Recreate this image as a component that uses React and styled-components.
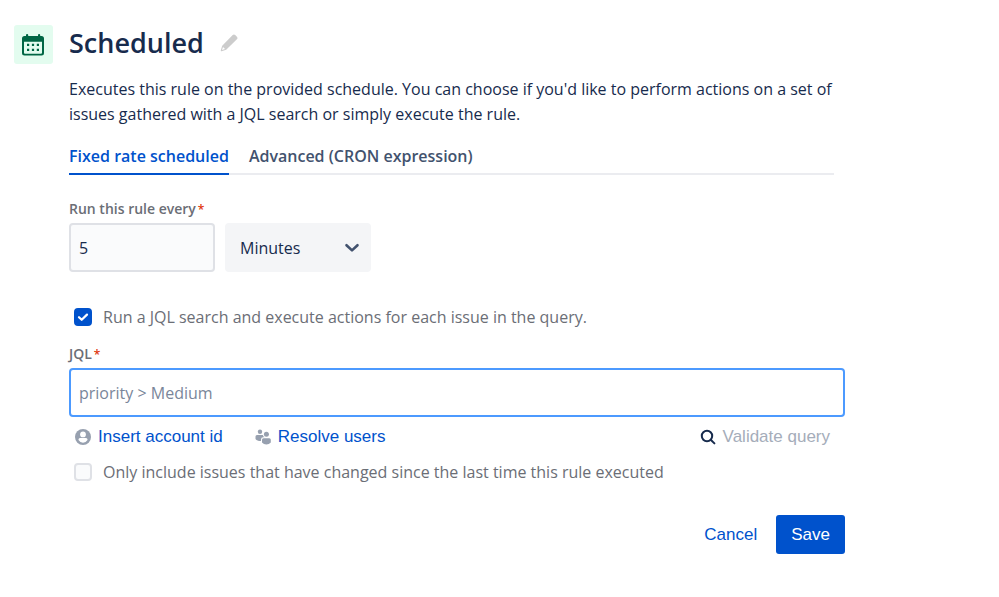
import React, { useState } from "react";
import styled, { createGlobalStyle } from "styled-components";

function App() {
    const [tab, setTab] = useState("fixed");
    const [runSearch, setRunSearch] = useState(true);
    const [onlyChanged, setOnlyChanged] = useState(false);

    return (
        <>
            <GlobalStyle />
            <PanelStyled>
                <IconTile>
                    <CalendarIcon />
                </IconTile>
                <FormStyled onSubmit={(e) => e.preventDefault()}>
                    <TitleRow>
                        <h1>Scheduled</h1>
                        <EditButton type="button" aria-label="Edit name">
                            <PencilIcon />
                        </EditButton>
                    </TitleRow>
                    <Description>
                        Executes this rule on the provided schedule. You can choose if you'd like to perform actions on a set of issues gathered with a JQL search or simply execute the rule.
                    </Description>
                    <TabList role="tablist">
                        <Tab type="button" role="tab" aria-selected={tab === "fixed"} $active={tab === "fixed"} onClick={() => setTab("fixed")}>
                            Fixed rate scheduled
                        </Tab>
                        <Tab type="button" role="tab" aria-selected={tab === "cron"} $active={tab === "cron"} onClick={() => setTab("cron")}>
                            Advanced (CRON expression)
                        </Tab>
                    </TabList>

                    <FieldLabel htmlFor="rate">Run this rule every<span>*</span></FieldLabel>
                    <RateRow>
                        <TextInput id="rate" type="text" defaultValue="5" />
                        <SelectStyled>
                            <select aria-label="Unit" defaultValue="Minutes">
                                <option>Minutes</option>
                                <option>Hours</option>
                                <option>Days</option>
                            </select>
                            <ChevronIcon />
                        </SelectStyled>
                    </RateRow>

                    <CheckRow>
                        <Checkbox checked={runSearch} onChange={setRunSearch} />
                        Run a JQL search and execute actions for each issue in the query.
                    </CheckRow>

                    <FieldLabel htmlFor="jql" $compact>JQL<span>*</span></FieldLabel>
                    <TextInput id="jql" type="text" placeholder="priority > Medium" $focused />
                    <LinkRow>
                        <LinkButton type="button"><PersonIcon />Insert account id</LinkButton>
                        <LinkButton type="button"><PeopleIcon />Resolve users</LinkButton>
                        <ValidateButton type="button" disabled><SearchIcon />Validate query</ValidateButton>
                    </LinkRow>
                    <CheckRow $compact>
                        <Checkbox checked={onlyChanged} onChange={setOnlyChanged} />
                        Only include issues that have changed since the last time this rule executed
                    </CheckRow>

                    <Actions>
                        <CancelButton type="button">Cancel</CancelButton>
                        <SaveButton type="submit">Save</SaveButton>
                    </Actions>
                </FormStyled>
            </PanelStyled>
        </>
    );
}

function Checkbox({ checked, onChange }) {
    return (
        <CheckboxStyled>
            <input type="checkbox" checked={checked} onChange={(e) => onChange(e.target.checked)} />
            {checked && (
                <svg width="18" height="18" viewBox="0 0 18 18" fill="none" aria-hidden="true">
                    <path d="M5 9.2l2.7 2.6L13 6.6" stroke="#fff" strokeWidth="2.2" strokeLinecap="round" strokeLinejoin="round" />
                </svg>
            )}
        </CheckboxStyled>
    );
}

function CalendarIcon() {
    return (
        <svg width="23" height="23" viewBox="0 0 23 23" fill="#006644" aria-hidden="true">
            <path fillRule="evenodd" d="M4 3V2a1 1 0 0 1 2.200 0v1h9.800V2a1 1 0 0 1 2.200 0v1h1.300A2.500 2.500 0 0 1 22 5.500v14.500a2.500 2.500 0 0 1-2.500 2.500h-17A2.500 2.500 0 0 1 0 20V5.500A2.500 2.500 0 0 1 2.500 3zM2 8.800v10.900a1 1 0 0 0 1 1h16a1 1 0 0 0 1-1V8.800z" />
            <path d="M5 10.800h2.200V13H5zM9.900 10.800h2.200V13H9.900zM14.800 10.800H17V13h-2.200zM5 15.800h2.200V18H5zM9.900 15.800h2.200V18H9.900zM14.800 15.800H17V18h-2.200z" />
        </svg>
    );
}

function PencilIcon() {
    return (
        <svg width="18" height="18" viewBox="0 0 18 18" fill="#ccc" aria-hidden="true">
            <path fillRule="evenodd" d="M12.700 1.100a1.800 1.800 0 0 1 2.500 0l1.700 1.700a1.800 1.800 0 0 1 0 2.500L6.200 15.800l-4.500 1.400a.700.700 0 0 1-.900-.900l1.400-4.500zM3 13l-1 3 3-1z" />
        </svg>
    );
}

function ChevronIcon() {
    return (
        <svg width="16" height="10" viewBox="0 0 16 10" fill="none" aria-hidden="true">
            <path d="M2.500 2.200L8 7.400l5.500-5.200" stroke="#42526e" strokeWidth="2.600" strokeLinecap="round" strokeLinejoin="round" />
        </svg>
    );
}

function PersonIcon() {
    return (
        <svg width="16" height="16" viewBox="0 0 16 16" aria-hidden="true">
            <circle cx="8" cy="8" r="8" fill="#97a0af" />
            <circle cx="8" cy="5.400" r="2.900" fill="#fff" />
            <path d="M3.500 11V10.500a1.500 1.500 0 0 1 1.500-1.500h6a1.500 1.500 0 0 1 1.500 1.500V11A6 6 0 0 1 8 13.800 6 6 0 0 1 3.500 11z" fill="#fff" />
        </svg>
    );
}

function PeopleIcon() {
    return (
        <svg width="16" height="16" viewBox="0 0 16 16" fill="#97a0af" aria-hidden="true">
            <circle cx="5" cy="2.700" r="2.200" />
            <circle cx="11.400" cy="5.200" r="2.500" />
            <path d="M2 6h5.800c.500 1.300 1 1.900 1.800 2.300H8.200A2.200 2.200 0 0 0 6 10.500v1.600C3.500 12.200 1.700 11.400.500 10V7.500A1.500 1.500 0 0 1 2 6z" />
            <path d="M8.500 9.200h5.800a1.500 1.500 0 0 1 1.500 1.500v2.900c-1.200 1.300-2.600 1.900-4.400 1.900S8.200 14.900 7 13.600v-2.900a1.500 1.500 0 0 1 1.500-1.500z" />
        </svg>
    );
}

function SearchIcon() {
    return (
        <svg width="16" height="16" viewBox="0 0 16 16" fill="none" stroke="#172b4d" strokeWidth="2" strokeLinecap="round" aria-hidden="true">
            <circle cx="7" cy="7" r="5.200" />
            <path d="M11 11l3.400 3.400" />
        </svg>
    );
}

const GlobalStyle = createGlobalStyle`
    *{
        box-sizing: border-box;
    }
    body{
        margin: 0;
        background: #fff;
        color: #172b4d;
        font-family: "Open Sans", "Noto Sans", sans-serif;
        font-size: 16px;
        line-height: 24px;
    }
    button, input, select{
        margin: 0;
        font: inherit;
    }
    button{
        padding: 0;
        border: none;
        background: none;
        cursor: pointer;
    }
    svg{
        display: block;
        flex: none;
    }
`;

const PanelStyled = styled.main`
    display: grid;
    grid-template-columns: 39px minmax(0, 776px);
    align-items: start;
    gap: 16px;
    padding: 25px 14px;
`;

const IconTile = styled.div`
    display: flex;
    align-items: center;
    justify-content: center;
    height: 39px;
    border-radius: 3px;
    background: #e3fcef;
`;

const FormStyled = styled.form`
    display: flex;
    flex-direction: column;
`;

const TitleRow = styled.div`
    display: flex;
    align-items: center;
    gap: 16px;
    h1{
        margin: 0;
        font-size: 27px;
        font-weight: 600;
        line-height: 36px;
    }
`;

const EditButton = styled.button`
    display: flex;
`;

const Description = styled.p`
    margin: 16px 0 0;
    line-height: 25px;
`;

const TabList = styled.div`
    display: flex;
    gap: 20px;
    margin: 13px 11px 0 0;
    box-shadow: inset 0 -2px #ebecf0;
`;

const Tab = styled.button`
    padding: 4px 0 5px;
    border-bottom: 2px solid ${(props) => (props.$active ? "#0052cc" : "transparent")};
    color: ${(props) => (props.$active ? "#0052cc" : "#42526e")};
    font-weight: 600;
`;

const FieldLabel = styled.label`
    align-self: flex-start;
    margin: ${(props) => (props.$compact ? "15px" : "24px")} 0 4px;
    color: #6b6e76;
    font-size: 14px;
    font-weight: 600;
    line-height: 20px;
    span{
        padding-left: 2px;
        color: #de350b;
        font-size: 12px;
        line-height: 12px;
    }
`;

const RateRow = styled.div`
    display: flex;
    gap: 10px;
    > *{
        width: 146px;
    }
`;

const TextInput = styled.input`
    height: 49px;
    padding: 0 8px;
    border: 2px solid ${(props) => (props.$focused ? "#4c9aff" : "#dfe1e6")};
    border-radius: 4px;
    background: ${(props) => (props.$focused ? "#fff" : "#fafbfc")};
    color: #172b4d;
    outline: none;
    &::placeholder{
        color: #7a869a;
        opacity: 1;
    }
`;

const SelectStyled = styled.div`
    display: grid;
    align-items: center;
    > *{
        grid-area: 1 / 1;
    }
    select{
        height: 49px;
        padding: 0 36px 0 15px;
        border: none;
        border-radius: 4px;
        background: #f4f5f7;
        color: #172b4d;
        appearance: none;
    }
    svg{
        justify-self: end;
        margin-right: 11px;
        pointer-events: none;
    }
`;

const CheckRow = styled.label`
    display: flex;
    align-items: center;
    align-self: flex-start;
    gap: 11px;
    margin-top: ${(props) => (props.$compact ? "11px" : "33px")};
    padding-left: 5px;
    color: #6b6e76;
`;

const CheckboxStyled = styled.span`
    display: grid;
    flex: none;
    > *{
        grid-area: 1 / 1;
    }
    input{
        width: 18px;
        height: 18px;
        margin: 0;
        border: 2px solid #dfe1e6;
        border-radius: 4px;
        background: #fafbfc;
        appearance: none;
    }
    input:checked{
        border-color: #0052cc;
        background: #0052cc;
    }
    svg{
        pointer-events: none;
    }
`;

const LinkRow = styled.div`
    display: flex;
    gap: 32px;
    margin-top: 8px;
    padding: 0 15px 0 6px;
`;

const LinkButton = styled.button`
    display: flex;
    align-items: center;
    gap: 7px;
    color: #0052cc;
    font-family: "Liberation Sans", Arial, sans-serif;
    font-size: 17px;
`;

const ValidateButton = styled(LinkButton)`
    margin-left: auto;
    color: #a5adba;
`;

const Actions = styled.div`
    display: flex;
    justify-content: flex-end;
    gap: 4px;
    margin-top: 31px;
`;

const CancelButton = styled.button`
    height: 39px;
    padding: 0 15px;
    border-radius: 3px;
    color: #0052cc;
    font-family: "Liberation Sans", Arial, sans-serif;
    font-size: 17px;
`;

const SaveButton = styled(CancelButton)`
    background: #0052cc;
    color: #fff;
`;

export default App;
